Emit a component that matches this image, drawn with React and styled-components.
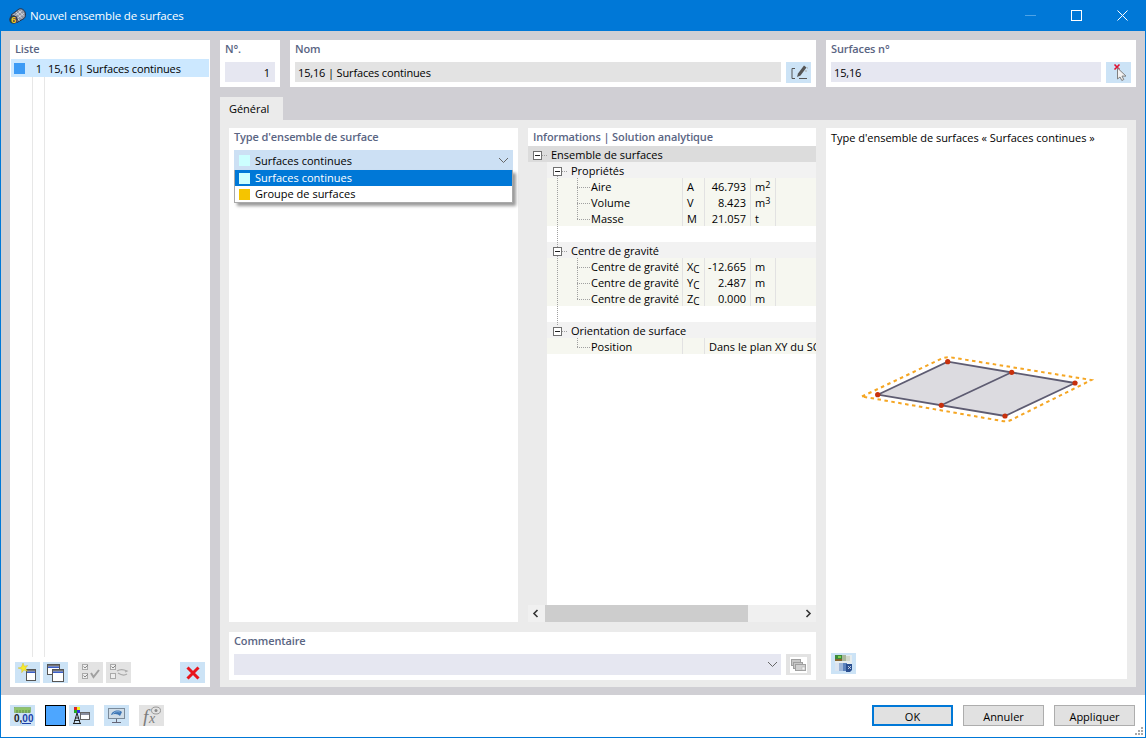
import React from "react";
import styled, { createGlobalStyle } from "styled-components";

const Global = createGlobalStyle`
  html, body { margin: 0; padding: 0; width: 1146px; height: 738px; overflow: hidden; background: #fff; }
  * { box-sizing: border-box; }
  body { font-family: "Open Sans", "Noto Sans", "Liberation Sans", sans-serif; font-size: 11px; color: #000; }
`;

const Win = styled.div`
  width: 1146px; height: 738px; display: flex; flex-direction: column;
  border: 1px solid #0078d7; border-top: 0; background: #fff;
`;
const TitleBar = styled.div`
  height: 31px; flex: none; background: #0078d7; color: #fff; display: flex; align-items: center;
  padding-left: 8px; font-size: 11.5px; letter-spacing: -.15px;
`;
const TitleText = styled.span` flex: 1; margin-left: 4px; `;
const WinBtn = styled.div`
  width: 46px; height: 30px; display: flex; align-items: center; justify-content: center;
`;
const Body = styled.div`
  flex: 1; min-height: 0; background: #d0cfd4; display: flex; gap: 10px; padding: 9px 9px 8px 9px;
`;
const Card = styled.div`
  background: #fff; display: flex; flex-direction: column; position: relative;
`;
const ListCard = styled(Card)` width: 200px; flex: none; padding: 1px 1px 4px; `;
const Label = styled.div`
  color: #5a6583; font-weight: 600; font-size: 11px; letter-spacing: -.12px; line-height: 16px; height: 16px; padding-left: ${p => p.$pad ?? 5}px;
`;
const ListRows = styled.div`
  flex: 1; margin-top: 2px; position: relative; display: flex; flex-direction: column;
`;
const ListRow = styled.div`
  height: 18px; background: #cce8ff; display: flex; align-items: center; line-height: 18px; padding-left: 3px; flex: none;
`;
const ListNo = styled.span` width: 12px; margin-left: 5px; padding-top: 2px; text-align: right; `;
const ListName = styled.span` margin-left: 6px; padding-top: 2px; letter-spacing: -.15px; `;
const Swatch = styled.i`
  display: block; flex: none; width: 11px; height: 11px; background: ${p => p.$c};
`;
const ListCells = styled.div`
  flex: 1; display: flex; padding-left: 21px; padding-bottom: 5px;
`;
const ListCol = styled.div`
  width: 12px; border-left: 1px solid #e7e7e7; flex: none;
`;
const ListFoot = styled.div`
  height: 21px; display: flex; padding-left: 4px; flex: none;
`;
const IconBtn = styled.div`
  width: 25px; height: 21px; flex: none; display: flex; align-items: center; justify-content: center;
  background: ${p => p.$off ? "#e3e3e3" : "#cce3f6"}; margin-left: ${p => p.$ml || 0}px;
`;
const Main = styled.div` flex: 1; min-width: 0; display: flex; flex-direction: column; `;
const TopRow = styled.div` display: flex; gap: 10px; height: 47px; flex: none; `;
const TopCard = styled(Card)` width: ${p => p.$w}px; flex: none; padding: 1px 5px 0; `;
const TopLabel = styled(Label)` padding-left: 0; margin-bottom: 5px; `;
const FieldRow = styled.div` display: flex; justify-content: space-between; `;
const Field = styled.div`
  height: 20px; line-height: 22px; background: ${p => p.$bg || "#e6e7f1"}; padding: 0 ${p => p.$pr || 0}px 0 ${p => p.$pl || 0}px; width: ${p => p.$w}px;
  text-align: ${p => p.$right ? "right" : "left"}; flex: none; letter-spacing: ${p => p.$tight ? "-.15px" : "0"};
`;
const Tabs = styled.div` height: 33px; flex: none; display: flex; align-items: flex-end; `;
const Tab = styled.div`
  width: 63px; height: 23px; background: #ebebeb; padding-left: 9px; line-height: 23px; letter-spacing: -.03px;
`;
const Pane = styled.div`
  flex: 1; min-height: 0; background: #ebebeb; padding: 8px 9px 8px; display: flex; gap: 10px;
`;
const PaneLeft = styled.div` width: 587px; flex: none; display: flex; flex-direction: column; gap: 10px; `;
const PaneCols = styled.div` height: 494px; flex: none; display: flex; gap: 10px; `;
const TypeCard = styled(Card)` width: 289px; flex: none; padding: 1px 5px; `;
const Select = styled.div`
  margin-top: 5px; height: 20px; background: #cce0f4; display: flex; align-items: center; padding: 0 4px 0 5px; gap: 5px; line-height: 20px;
`;
const SelText = styled.span` flex: 1; padding-top: 2px; `;
const Menu = styled.div`
  position: absolute; left: 5px; top: 42px; width: 279px; height: 33px; background: #fff;
  border: 1px solid #a9a9a9; border-top: 0; box-shadow: 3px 3px 3px rgba(0,0,0,.4); z-index: 3;
`;
const MenuItem = styled.div`
  height: 16px; display: flex; align-items: center; gap: 5px; padding-left: 4px; line-height: 16px;
  background: ${p => p.$on ? "#0078d7" : "#fff"}; color: ${p => p.$on ? "#fff" : "#000"};
`;
const InfoCard = styled(Card)` width: 288px; flex: none; overflow: hidden; `;
const InfoHead = styled(Label)` height: 18px; line-height: 18px; flex: none; `;
const InfoBody = styled.div` flex: 1; min-height: 0; display: flex; background: #fff; `;
const Gutter = styled.div` width: 19px; flex: none; background: #ebebeb; `;
const Tree = styled.div` flex: 1; min-width: 0; position: relative; `;
const TreeRows = styled.div` margin-left: -19px; position: relative; `;
const Row = styled.div`
  height: 16px; line-height: 16px; display: flex; white-space: nowrap; background: ${p => p.$bg || "transparent"};
  margin-left: ${p => p.$ml || 0}px;
  & > span { padding-top: 1px; }
`;
const Exp = styled.span`
  position: absolute; left: ${p => p.$x}px; top: ${p => p.$y}px; width: 9px; height: 9px; border: 1px solid #6f6f6f; background: #fff; z-index: 2;
  &::after { content: ""; position: absolute; left: 1px; right: 1px; top: 3px; height: 1px; background: #222; }
`;
const Name = styled.span` width: ${p => p.$w}px; padding-left: ${p => p.$pad}px; flex: none; overflow: hidden; `;
const Sym = styled.span` width: 22px; flex: none; padding-left: 4px; border-left: 1px solid #e2e2e2; `;
const Val = styled.span` width: 46px; flex: none; padding-right: 4px; text-align: right; border-left: 1px solid #e2e2e2; `;
const Unit = styled.span` width: 26px; flex: none; padding-left: 4px; border-left: 1px solid #e2e2e2; border-right: 1px solid #e2e2e2; `;
const Wide = styled.span` flex: none; padding-left: 4px; border-left: 1px solid #e2e2e2; width: 160px; `;
const Sup = styled.sup` font-size: 9px; line-height: 0; vertical-align: 3px; `;
const Sub = styled.sub` font-size: 10px; line-height: 0; vertical-align: -2px; `;
const Dots = styled.span`
  position: absolute; z-index: 1;
  left: ${p => p.$x}px; top: ${p => p.$y}px;
  width: ${p => p.$w || 1}px; height: ${p => p.$h || 1}px;
  background-image: ${p => p.$h ? "repeating-linear-gradient(to bottom,#a0a0a0 0 1px,transparent 1px 2px)" : "repeating-linear-gradient(to right,#a0a0a0 0 1px,transparent 1px 2px)"};
`;
const Scroll = styled.div` height: 17px; flex: none; background: #f0f0f0; display: flex; align-items: center; justify-content: space-between; padding: 0 4px; position: relative; `;
const Thumb = styled.div` position: absolute; left: 17px; width: 203px; top: 0; bottom: 0; background: #cdcdcd; `;
const CommentCard = styled(Card)` flex: 1; padding: 1px 5px 5px; `;
const CommentRow = styled.div` margin-top: 5px; display: flex; gap: 5px; `;
const Combo = styled.div` flex: 1; height: 21px; background: #e6e7f1; display: flex; align-items: center; justify-content: flex-end; padding-right: 3px; `;
const PreviewCard = styled(Card)` flex: 1; padding: 2px 5px 5px; `;
const PreviewTitle = styled.div` line-height: 16px; letter-spacing: -.02px; `;
const PreviewArt = styled.div` flex: 1; display: flex; align-items: flex-start; padding-top: 209px; padding-left: 29px; `;
const Footer = styled.div`
  height: 42px; flex: none; display: flex; align-items: flex-start; padding: 10px 10px 0 9px; position: relative;
`;
const FootIcons = styled.div` flex: 1; display: flex; `;
const BlueSq = styled.div` width: 21px; height: 21px; background: #4da6ff; border: 1px solid #000; margin-left: 10px; margin-right: 3px; `;
const Btn = styled.div`
  width: 81px; height: 21px; background: #e1e1e1; border: ${p => p.$def ? "2px solid #0078d7" : "1px solid #adadad"};
  text-align: center; line-height: ${p => p.$def ? 19 : 21}px; margin-left: ${p => p.$ml || 0}px; flex: none;
`;
const Grip = styled.svg` position: absolute; right: 0; bottom: 0; `;

const NewIcon = () => (
  <svg width="22" height="20" viewBox="0 0 22 20">
    <rect x="9.5" y="6.5" width="9" height="11" fill="#fff" stroke="#555" />
    <rect x="10" y="7" width="8" height="1.5" fill="#777" />
    <rect x="10" y="8.5" width="8" height="1.5" fill="#3a5fc8" />
    <path d="M6 0l1.3 3.2 3.4-.7-2.2 2.7 1.8 3-3.4-1.1-2.2 2.6.1-3.4L1 5l3.4-.8z" fill="#f7ea2c" stroke="#cdb61a" strokeWidth=".4" />
  </svg>
);
const CopyIcon = () => (
  <svg width="22" height="20" viewBox="0 0 22 20">
    <rect x="2.5" y="1.5" width="12" height="10" fill="#fff" stroke="#555" />
    <rect x="3" y="2" width="11" height="1.5" fill="#777" />
    <rect x="3" y="3.5" width="11" height="1.5" fill="#3a5fc8" />
    <rect x="7.5" y="6.5" width="11" height="12" fill="#fff" stroke="#555" />
    <rect x="8" y="7" width="10" height="1.5" fill="#777" />
    <rect x="8" y="8.5" width="10" height="1.5" fill="#3a5fc8" />
  </svg>
);
const CheckAll = () => (
  <svg width="20" height="18" viewBox="0 0 20 18" fill="none" stroke="#aaa">
    <rect x="1.5" y=".5" width="5" height="5" fill="#eee" /><rect x="1.5" y="9.5" width="5" height="5" fill="#eee" />
    <path d="M2.5 2.5l1.5 1.5 3-3M2.5 11.5l1.5 1.5 3-3" stroke="#888" />
    <path d="M10 9l2.5 4 5.5-7" strokeWidth="2" stroke="#a0a0a0" />
  </svg>
);
const CheckSwap = () => (
  <svg width="20" height="18" viewBox="0 0 20 18" fill="none" stroke="#aaa">
    <rect x="1.5" y=".5" width="5" height="5" fill="#eee" /><rect x="1.5" y="9.5" width="5" height="5" fill="#eee" />
    <path d="M2.5 2.5l1.5 1.5 3-3" stroke="#888" />
    <path d="M8 7c3-2 6-2 10 0l-2 1M18 10c-3 2-6 1-9-1" strokeWidth="1.3" />
  </svg>
);
const RedX = () => (
  <svg width="14" height="14" viewBox="0 0 14 14"><path d="M1.5 1.5l11 11M12.5 1.5l-11 11" stroke="#e8141c" strokeWidth="3" /></svg>
);
const EditIcon = () => (
  <svg width="20" height="16" viewBox="0 0 20 16" fill="none">
    <path d="M6 3.5H3V13.5H6M10 13.5h8" stroke="#555" />
    <path d="M8 12l1-3.5 6-8 2.5 2-6 8z" fill="#555" />
    <path d="M16 6h2M18 3h1" stroke="#aaa" />
  </svg>
);
const PickIcon = () => (
  <svg width="18" height="20" viewBox="0 0 18 20">
    <path d="M4.5 1.5l5 5M9.5 1.5l-5 5" stroke="#e01030" strokeWidth="1.6" />
    <path d="M7.5 5v11l2.5-2 1.8 3.5 2-1-1.8-3.4H16z" fill="#f2f2f2" stroke="#808080" />
  </svg>
);
const Chevron = () => (
  <svg width="11" height="7" viewBox="0 0 11 7" fill="none"><path d="M1 1l4.5 4.5L10 1" stroke="#666" /></svg>
);
const ArrowL = () => (<svg width="7" height="9" viewBox="0 0 7 9" fill="none"><path d="M5.5 1L2 4.5 5.5 8" stroke="#333" strokeWidth="1.6" /></svg>);
const ArrowR = () => (<svg width="7" height="9" viewBox="0 0 7 9" fill="none"><path d="M1.5 1L5 4.5 1.5 8" stroke="#333" strokeWidth="1.6" /></svg>);
const LibIcon = () => (
  <svg width="17" height="16" viewBox="0 0 17 16">
    <rect width="17" height="16" fill="#fff" />
    <rect x="1.5" y="2.5" width="9" height="6" fill="#c8c8c8" stroke="#a0a0a0" />
    <rect x="3.5" y="5.5" width="9" height="6" fill="#c8c8c8" stroke="#a0a0a0" />
    <rect x="5.5" y="7.5" width="10" height="6" fill="#d0d0d0" stroke="#a0a0a0" />
    <rect x="12" y="10" width="3" height="3" fill="#f4f4f4" stroke="#aaa" strokeWidth=".5" />
  </svg>
);
const RenderIcon = () => (
  <svg width="19" height="17" viewBox="0 0 19 17">
    <rect x="1" y="0" width="17" height="14" fill="#e6ecee" />
    <rect x="1" y="0" width="7" height="4" fill="#3c8a3a" />
    <rect x="1" y="4" width="7" height="2" fill="#86642c" />
    <rect x="4" y="1" width="3" height="2" fill="#7fd04a" />
    <rect x="8" y="0" width="4" height="6" fill="#a9b79c" />
    <rect x="12" y="1" width="4" height="5" fill="#d2d8cc" />
    <rect x="1" y="8" width="4" height="8" fill="#dbe4f0" />
    <rect x="5" y="8" width="4" height="8" fill="#9db5d8" />
    <rect x="9" y="8" width="4" height="8" fill="#5d83bd" />
    <path d="M12 9h6v6l-2 2h-4z" fill="#2a4f90" />
    <path d="M14 11l3 3M14 14l3-3" stroke="#dfe9f5" strokeWidth=".8" />
  </svg>
);
const RulerIcon = () => (
  <svg width="25" height="21" viewBox="0 0 25 21">
    <rect x="4.5" y="2.5" width="16" height="5" fill="#8fc46a" stroke="#7aab58" strokeWidth=".6" />
    <path d="M7 5v3M10 5v3M13 5v3M16 5v3M19 5v3" stroke="#4f7a36" strokeWidth=".7" />
    <text x="4" y="17" fontFamily="Liberation Sans, sans-serif" fontSize="10" fontWeight="700" fill="#222">0,<tspan fill="#1c3fa8">00</tspan></text>
    <path d="M12 18.5h9" stroke="#1c3fa8" />
  </svg>
);
const ColorIcon = () => (
  <svg width="25" height="21" viewBox="0 0 25 21">
    <rect x="5" y="2" width="3" height="3" fill="#d22" /><rect x="8" y="2" width="3" height="3" fill="#ee2" />
    <rect x="5" y="5" width="3" height="3" fill="#2a2" /><rect x="8" y="5" width="3" height="3" fill="#33d" />
    <path d="M8 8l-3 10M8 8l3 10M6 13h4M5 15.5h6M4 18.5h8" stroke="#222" fill="none" />
    <rect x="11.5" y="7.5" width="9" height="7" fill="#fff" stroke="#666" />
    <rect x="12" y="8" width="8" height="2" fill="#8a8fa0" />
  </svg>
);
const ScreenIcon = () => (
  <svg width="25" height="21" viewBox="0 0 25 21">
    <rect x="4.5" y="3.5" width="16" height="10" fill="#d0dde8" stroke="#7a8a9a" />
    <path d="M7 10c1-4 7-6 11-3l-2 4c-2-2-5-3-9-1z" fill="#3f77b5" />
    <path d="M9 9c1-2 4-3 7-2" stroke="#9cc0e6" fill="none" strokeWidth=".7" />
    <path d="M12.5 14v3M8 17.5h9" stroke="#667" />
  </svg>
);
const FxIcon = () => (
  <svg width="25" height="21" viewBox="0 0 25 21">
    <text x="4" y="18" fontFamily="Liberation Serif, serif" fontStyle="italic" fontSize="19" fill="#7c7c7c">f</text>
    <text x="10" y="18" fontFamily="Liberation Serif, serif" fontStyle="italic" fontSize="14" fill="#7c7c7c">x</text>
    <ellipse cx="17" cy="5.5" rx="4.5" ry="3.5" fill="none" stroke="#999" />
    <circle cx="17" cy="5.5" r="1.5" fill="#8a8a8a" />
  </svg>
);
const AppIcon = () => (
  <svg width="17" height="16" viewBox="0 0 17 16">
    <path d="M2 7L10 1c2-1 5 .5 6 3s.5 5-1 6.5L8 14.5z" fill="#8b92a2" stroke="#23283a" strokeWidth=".9" />
    <path d="M4.5 6l6 6.5M7 4l6 6.5M9.5 2.5l5.5 6M4 9.5l9-7M6 12l9-7" stroke="#eceef3" strokeWidth=".7" />
    <circle cx="4.5" cy="11.5" r="4.3" fill="#2a3a50" />
    <text x="4.5" y="14.8" textAnchor="middle" fontFamily="Liberation Sans, sans-serif" fontSize="9.5" fontWeight="700" fill="#f8c81e">6</text>
  </svg>
);
const Art = () => (
  <svg width="234" height="70" viewBox="0 0 234 70">
    <path d="M2 41.5L82 3.5Q87 1.5 92 2.5L231.5 25 151 65Q147 67 142 66Z" fill="none" stroke="#f5a623" strokeWidth="2" strokeDasharray="3.5 3.5" />
    <path d="M17.7 39.7L87.7 6.7 215 28 145 61z" fill="#dcdbe0" />
    <path d="M17.7 39.7L87.7 6.7 215 28 145 61zM81.3 50.3L151.7 17.3" fill="none" stroke="#5e5c72" strokeWidth="1.8" />
    {[[17.7, 39.7], [87.7, 6.7], [151.7, 17.3], [215, 28], [145, 61], [81.3, 50.3]].map(([x, y]) => (
      <circle key={x} cx={x} cy={y} r="2.6" fill="#c8300c" />
    ))}
  </svg>
);

const Gray = "#f6f7f0";
const Head1 = "#dcdcdc";
const Head2 = "#f2f2f2";

const dataRow = (name, sym, val, unit) => (
  <Row $bg={Gray} $ml={19} key={name + val}>
    <Name $w={135} $pad={44}>{name}</Name>
    <Sym>{sym}</Sym><Val>{val}</Val><Unit>{unit}</Unit>
  </Row>
);

export default function App() {
  return (
    <Win>
      <Global />
      <TitleBar>
        <AppIcon />
        <TitleText>Nouvel ensemble de surfaces</TitleText>
        <WinBtn><svg width="11" height="1"><rect width="11" height="1" fill="#4ea3e6" /></svg></WinBtn>
        <WinBtn><svg width="11" height="11" fill="none"><rect x=".5" y=".5" width="10" height="10" stroke="#fff" /></svg></WinBtn>
        <WinBtn><svg width="11" height="11" fill="none"><path d="M.5.5l10 10M10.5.5l-10 10" stroke="#fff" /></svg></WinBtn>
      </TitleBar>
      <Body>
        <ListCard>
          <Label $pad={4}>Liste</Label>
          <ListRows>
            <ListRow>
              <Swatch $c="#3d9bf5" />
              <ListNo>1</ListNo>
              <ListName>15,16 | Surfaces continues</ListName>
            </ListRow>
            <ListCells>
              <ListCol />
              <ListCol />
            </ListCells>
          </ListRows>
          <ListFoot>
            <IconBtn><NewIcon /></IconBtn>
            <IconBtn $ml={3}><CopyIcon /></IconBtn>
            <IconBtn $ml={10} $off><CheckAll /></IconBtn>
            <IconBtn $ml={3} $off><CheckSwap /></IconBtn>
            <IconBtn $ml={49}><RedX /></IconBtn>
          </ListFoot>
        </ListCard>
        <Main>
          <TopRow>
            <TopCard $w={60}>
              <TopLabel>N°.</TopLabel>
              <Field $w={50} $right $pr={5}>1</Field>
            </TopCard>
            <TopCard $w={526}>
              <TopLabel>Nom</TopLabel>
              <FieldRow>
                <Field $w={486} $bg="#e3e3e3" $pl={3} $tight>15,16 | Surfaces continues</Field>
                <IconBtn><EditIcon /></IconBtn>
              </FieldRow>
            </TopCard>
            <TopCard $w={310}>
              <TopLabel>Surfaces n°</TopLabel>
              <FieldRow>
                <Field $w={270} $pl={3} $tight>15,16</Field>
                <IconBtn><PickIcon /></IconBtn>
              </FieldRow>
            </TopCard>
          </TopRow>
          <Tabs><Tab>Général</Tab></Tabs>
          <Pane>
            <PaneLeft>
              <PaneCols>
                <TypeCard>
                  <Label $pad={0}>Type d'ensemble de surface</Label>
                  <Select>
                    <Swatch $c="#ccffff" />
                    <SelText>Surfaces continues</SelText>
                    <Chevron />
                  </Select>
                  <Menu>
                    <MenuItem $on><Swatch $c="#ccffff" />Surfaces continues</MenuItem>
                    <MenuItem><Swatch $c="#f5c400" />Groupe de surfaces</MenuItem>
                  </Menu>
                </TypeCard>
                <InfoCard>
                  <InfoHead>Informations | Solution analytique</InfoHead>
                  <InfoBody>
                    <Gutter />
                    <Tree>
                      <TreeRows>
                        <Dots $x={29} $y={30} $h={150} />
                        <Dots $x={49} $y={32} $h={41} />
                        <Dots $x={49} $y={112} $h={41} />
                        <Dots $x={49} $y={192} $h={9} />
                        <Dots $x={14} $y={9} $w={6} />
                        <Dots $x={34} $y={25} $w={6} />
                        <Dots $x={34} $y={105} $w={6} />
                        <Dots $x={34} $y={185} $w={6} />
                        {[41, 57, 73, 121, 137, 153, 201].map(y => <Dots key={y} $x={49} $y={y} $w={13} />)}
                        <Exp $x={5} $y={5} />
                        <Exp $x={25} $y={21} />
                        <Exp $x={25} $y={101} />
                        <Exp $x={25} $y={181} />
                        <Row $bg={Head1}><Name $w={200} $pad={23}>Ensemble de surfaces</Name></Row>
                        <Row $bg={Head2} $ml={19}><Name $w={200} $pad={24}>Propriétés</Name></Row>
                        {dataRow("Aire", "A", "46.793", <>m<Sup>2</Sup></>)}
                        {dataRow("Volume", "V", "8.423", <>m<Sup>3</Sup></>)}
                        {dataRow("Masse", "M", "21.057", "t")}
                        <Row />
                        <Row $bg={Head2} $ml={19}><Name $w={200} $pad={24}>Centre de gravité</Name></Row>
                        {dataRow("Centre de gravité", <>X<Sub>C</Sub></>, "-12.665", "m")}
                        {dataRow("Centre de gravité", <>Y<Sub>C</Sub></>, "2.487", "m")}
                        {dataRow("Centre de gravité", <>Z<Sub>C</Sub></>, "0.000", "m")}
                        <Row />
                        <Row $bg={Head2} $ml={19}><Name $w={200} $pad={24}>Orientation de surface</Name></Row>
                        <Row $bg={Gray} $ml={19}>
                          <Name $w={135} $pad={44}>Position</Name>
                          <Sym />
                          <Wide>Dans le plan XY du SCG</Wide>
                        </Row>
                      </TreeRows>
                    </Tree>
                  </InfoBody>
                  <Scroll>
                    <ArrowL />
                    <Thumb />
                    <ArrowR />
                  </Scroll>
                </InfoCard>
              </PaneCols>
              <CommentCard>
                <Label $pad={0}>Commentaire</Label>
                <CommentRow>
                  <Combo><Chevron /></Combo>
                  <IconBtn $off><LibIcon /></IconBtn>
                </CommentRow>
              </CommentCard>
            </PaneLeft>
            <PreviewCard>
              <PreviewTitle>Type d'ensemble de surfaces « Surfaces continues »</PreviewTitle>
              <PreviewArt><Art /></PreviewArt>
              <IconBtn><RenderIcon /></IconBtn>
            </PreviewCard>
          </Pane>
        </Main>
      </Body>
      <Footer>
        <FootIcons>
          <IconBtn><RulerIcon /></IconBtn>
          <BlueSq />
          <IconBtn><ColorIcon /></IconBtn>
          <IconBtn $ml={10}><ScreenIcon /></IconBtn>
          <IconBtn $ml={10} $off><FxIcon /></IconBtn>
        </FootIcons>
        <Btn $def>OK</Btn>
        <Btn $ml={10}>Annuler</Btn>
        <Btn $ml={10}>Appliquer</Btn>
        <Grip width="12" height="12" viewBox="0 0 12 12" fill="#a8a8a8">
          <rect x="8" y="2" width="2" height="2" /><rect x="5" y="5" width="2" height="2" /><rect x="8" y="5" width="2" height="2" />
          <rect x="2" y="8" width="2" height="2" /><rect x="5" y="8" width="2" height="2" /><rect x="8" y="8" width="2" height="2" />
        </Grip>
      </Footer>
    </Win>
  );
}
